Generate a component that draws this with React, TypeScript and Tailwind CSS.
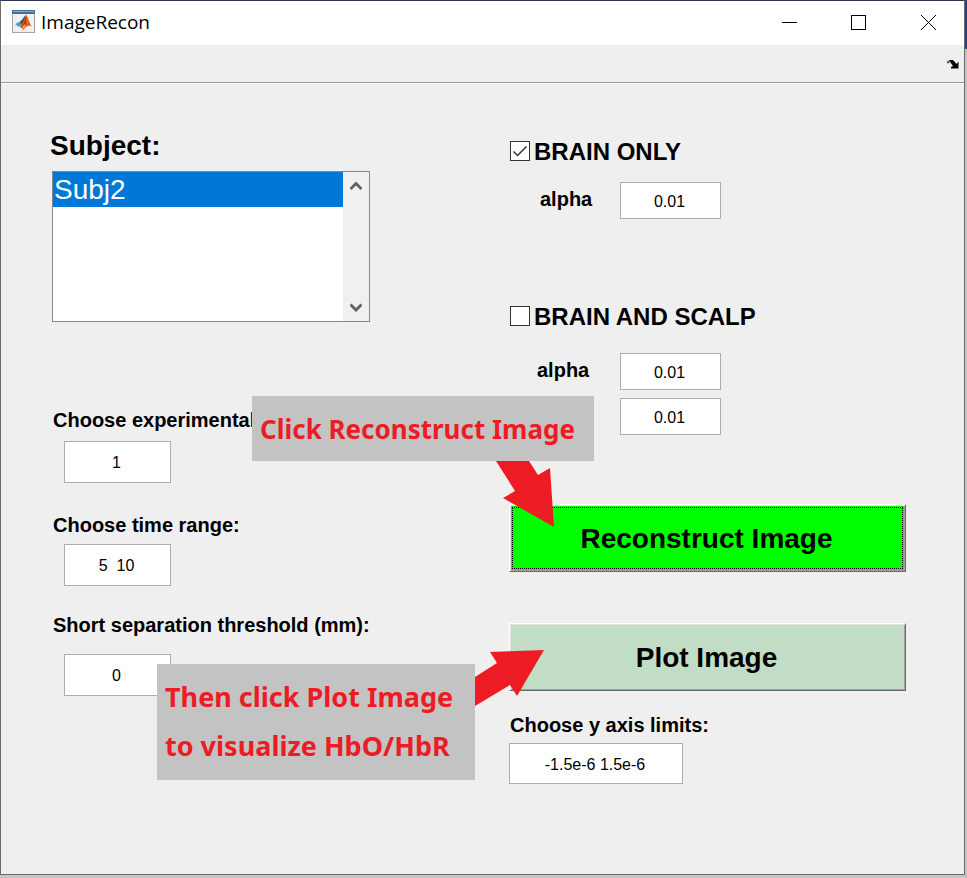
import React, { useState } from 'react';
import clsx from 'clsx';

const MatlabIcon: React.FC = () => (
  <svg width="24" height="24" viewBox="0 0 24 24" aria-hidden="true">
    <rect x="0.5" y="0.5" width="22" height="22" fill="#f0f0f0" stroke="#a2a6aa" />
    <rect x="0" y="0" width="23" height="4" fill="#3f6f94" />
    <rect x="1" y="1" width="21" height="1" fill="#7fb2d6" />
    <path d="M3 14 L8 11.5 L10.5 14 L7 17 Z" fill="#4f9bd0" />
    <path d="M8 11.5 C11 10 12 6 14 5 L11.5 14.5 L10 15.5 Z" fill="#2c4f78" />
    <path d="M14 5 C16 6 17 13 20 17 C17 14.5 15 16 11 20 C10.5 18 9 17 7 17 C10 16 12 10 14 5 Z" fill="#e0601c" />
    <path d="M14 6 C14.5 10 14 15 11 20 C10.5 18 9.5 17.5 9 17 C12 15 13 11 14 6 Z" fill="#a5271c" />
    <path d="M10 17 L13 14 L13 17.5 L11 20 Z" fill="#f6a62a" />
  </svg>
);

const TitleBar: React.FC = () => (
  <header className="flex h-11 items-center bg-white pb-0.5 pl-[11px]">
    <MatlabIcon />
    <h1 className="ml-[5px] flex-1 font-['Open_Sans',sans-serif] text-[19px] leading-6">ImageRecon</h1>
    <button type="button" aria-label="Minimize" className="flex h-full w-[69px] items-center justify-center">
      <svg width="15" height="15" shapeRendering="crispEdges">
        <path d="M0 7.5 H15" stroke="#000" />
      </svg>
    </button>
    <button type="button" aria-label="Maximize" className="flex h-full w-[69px] items-center justify-center">
      <svg width="15" height="15" shapeRendering="crispEdges">
        <rect x="0.5" y="0.5" width="14" height="14" fill="none" stroke="#000" />
      </svg>
    </button>
    <button type="button" aria-label="Close" className="flex h-full w-[71px] items-center justify-center">
      <svg width="15" height="15">
        <path d="M0 0 L15 15 M15 0 L0 15" stroke="#000" />
      </svg>
    </button>
  </header>
);

const Toolbar: React.FC = () => (
  <div className="flex h-[39px] items-center justify-end border-b border-white pr-[5px] shadow-[inset_0_-1px_0_#999]">
    <button type="button" aria-label="Dock figure">
      <svg width="12" height="9" viewBox="0 0 12 9">
        <path d="M0 3 V1.5 L1.5 0.5 L3 2 L1.5 3.5 Z" fill="#555" />
        <path d="M2 0 H6 L9.5 4 L11.5 1.5 V8.5 H4 V7 L6 6 L3.5 2.5 Z" fill="#000" />
      </svg>
    </button>
  </div>
);

interface FieldProps {
  id: string;
  value: string;
  label?: string;
  className?: string;
}

const TextField: React.FC<FieldProps> = ({ id, value, label, className }) => {
  const [text, setText] = useState(value);
  return (
    <input
      id={id}
      type="text"
      aria-label={label}
      value={text}
      onChange={(e) => setText(e.target.value)}
      className={clsx('block border border-[#abadb3] bg-white pt-0.5 pr-0.5 text-center text-base', className)}
    />
  );
};

interface CheckProps {
  id: string;
  label: string;
  defaultChecked?: boolean;
}

const CheckBox: React.FC<CheckProps> = ({ id, label, defaultChecked }) => (
  <div className="flex h-7 items-center gap-1 pl-px">
    <span className="grid">
      <input
        id={id}
        type="checkbox"
        defaultChecked={defaultChecked}
        className="peer col-start-1 row-start-1 size-5 appearance-none border border-[#333] bg-white"
      />
      <svg
        width="20"
        height="20"
        viewBox="0 0 20 20"
        className="pointer-events-none invisible col-start-1 row-start-1 peer-checked:visible"
      >
        <path d="M3.5 10.5 L7.5 14.5 L16.5 5.5" fill="none" stroke="#333" strokeWidth="1.5" />
      </svg>
    </span>
    <label htmlFor={id} className="pt-0.5 text-2xl leading-7 font-bold whitespace-nowrap">{label}</label>
  </div>
);

const ListArrow: React.FC<{ up?: boolean }> = ({ up }) => (
  <button type="button" aria-label={up ? 'Scroll up' : 'Scroll down'} className="flex h-7 items-center justify-center">
    <svg width="12" height="10" viewBox="0 0 12 10">
      <path
        d={up ? 'M0.5 8 L6 2.5 L11.5 8' : 'M0.5 2.5 L6 8 L11.5 2.5'}
        fill="none"
        stroke="#606060"
        strokeWidth="2.75"
      />
    </svg>
  </button>
);

interface PushButtonProps {
  children: React.ReactNode;
  className?: string;
}

const PushButton: React.FC<PushButtonProps> = ({ children, className }) => (
  <button
    type="button"
    className={clsx(
      'block h-[68px] w-full border border-t-white border-r-[#696969] border-b-[#696969] border-l-white pt-0.5 pr-0.5 text-[28px] font-bold shadow-[inset_1px_1px_0_#e3e3e3,inset_-1px_-1px_0_#a0a0a0]',
      className
    )}
  >
    {children}
  </button>
);

const labelClass = 'block text-xl leading-6 font-bold whitespace-nowrap';

const App: React.FC = () => {
  const [subject, setSubject] = useState('Subj2');

  return (
    <div className="flex min-h-screen bg-[#c4c4c4] font-['Liberation_Sans',Arial,sans-serif] text-black">
      <div className="relative mb-[3px] flex flex-1 flex-col border border-t-[#2b3553] border-r-[#6b6b6b] border-b-[#6b6b6b] border-l-[#6b6b6b] bg-[#efefef]">
        <TitleBar />
        <Toolbar />

        <main className="grid flex-1 grid-cols-[459px_1fr] pr-[58px] pl-[49px]">
          <section className="pt-[46px]">
            <label htmlFor="subject" className="block text-[28px] leading-8 font-bold">Subject:</label>
            <div className="mt-[9px] ml-0.5 flex h-[151px] w-[318px] border border-[#828790] bg-white">
              <select
                id="subject"
                size={4}
                value={subject}
                onChange={(e) => setSubject(e.target.value)}
                className="flex-1 appearance-none overflow-hidden bg-white text-[28px] outline-none"
              >
                <option
                  value="Subj2"
                  className="h-[35px] px-px pt-0.5 pb-0 leading-[35px] checked:bg-linear-to-r checked:from-[#0078d7] checked:to-[#0078d7] checked:[-webkit-text-fill-color:white]"
                >
                  Subj2
                </option>
              </select>
              <div className="flex w-[26px] flex-col justify-between bg-[#f0f0f0]">
                <ListArrow up />
                <ListArrow />
              </div>
            </div>

            <div className="mt-[86px] pl-[3px]">
              <label htmlFor="condition" className={labelClass}>Choose experimental</label>
              <TextField id="condition" value="1" className="mt-[9px] ml-[11px] h-[42px] w-[107px]" />
              <label htmlFor="time-range" className={clsx(labelClass, 'mt-[30px]')}>Choose time range:</label>
              <TextField id="time-range" value="5  10" className="mt-[7px] ml-[11px] h-[42px] w-[107px]" />
              <label htmlFor="threshold" className={clsx(labelClass, 'mt-[27px]')}>
                Short separation threshold (mm):
              </label>
              <TextField id="threshold" value="0" className="mt-[17px] ml-[11px] h-[42px] w-[107px]" />
            </div>
          </section>

          <section className="pt-[53px]">
            <CheckBox id="brain-only" label="BRAIN ONLY" defaultChecked />
            <div className="mt-[17px] flex items-center pl-[31px]">
              <label htmlFor="alpha-brain" className={clsx(labelClass, 'w-20 pb-1')}>alpha</label>
              <TextField id="alpha-brain" value="0.01" className="h-[37px] w-[101px]" />
            </div>

            <div className="mt-[83px]">
              <CheckBox id="brain-scalp" label="BRAIN AND SCALP" />
            </div>
            <div className="mt-[23px] flex items-center pl-7">
              <label htmlFor="alpha-cortex" className={clsx(labelClass, 'w-[83px] pb-1')}>alpha</label>
              <TextField id="alpha-cortex" value="0.01" className="h-[37px] w-[101px]" />
            </div>
            <TextField id="alpha-scalp" value="0.01" label="alpha scalp" className="mt-2 ml-[111px] h-[37px] w-[101px]" />

            <div className="mt-[69px] space-y-[51px]">
              <PushButton className="bg-[#00ff00] outline-1 -outline-offset-4 outline-black outline-dotted">
                Reconstruct Image
              </PushButton>
              <PushButton className="bg-[#c1ddc6]">Plot Image</PushButton>
            </div>

            <label htmlFor="y-limits" className={clsx(labelClass, 'mt-[22px] pl-px')}>Choose y axis limits:</label>
            <TextField id="y-limits" value="-1.5e-6 1.5e-6" className="mt-1.5 h-[41px] w-[174px]" />
          </section>
        </main>

        {/* Tutorial callouts floating over the form */}
        <div className="absolute top-[395px] left-[251px] flex h-[65px] w-[342px] items-center bg-[#c3c3c3] pt-0.5 pl-2 font-['Noto_Sans',sans-serif] text-[26px] font-bold whitespace-nowrap text-[#ed1c24]">
          Click Reconstruct Image
          <svg width="60" height="68" viewBox="0 0 60 68" className="absolute top-[65px] left-[243px]">
            <path d="M1 0 H34 L43 14 L55 7 L59 66 L8 37 L20 30 Z" fill="#ed1c24" />
          </svg>
        </div>
        <div className="absolute top-[663px] left-[156px] h-[116px] w-[318px] bg-[#c3c3c3] pt-2 pl-2 font-['Noto_Sans',sans-serif] text-[27px] leading-[49px] font-bold whitespace-nowrap text-[#ed1c24]">
          <p>Then click Plot Image</p>
          <p>to visualize HbO/HbR</p>
          <svg width="70" height="60" viewBox="0 0 70 60" className="absolute top-[-15px] left-[318px]">
            <path d="M0 28 L22 14 L15 3 L69 1 L42 47 L35 36 L0 57 Z" fill="#ed1c24" />
          </svg>
        </div>
      </div>

      {/* Sliver of the desktop to the right of the window */}
      <div className="w-0.5">
        <div className="h-[49px] bg-[#1f4480]" />
      </div>
    </div>
  );
};

export default App;
